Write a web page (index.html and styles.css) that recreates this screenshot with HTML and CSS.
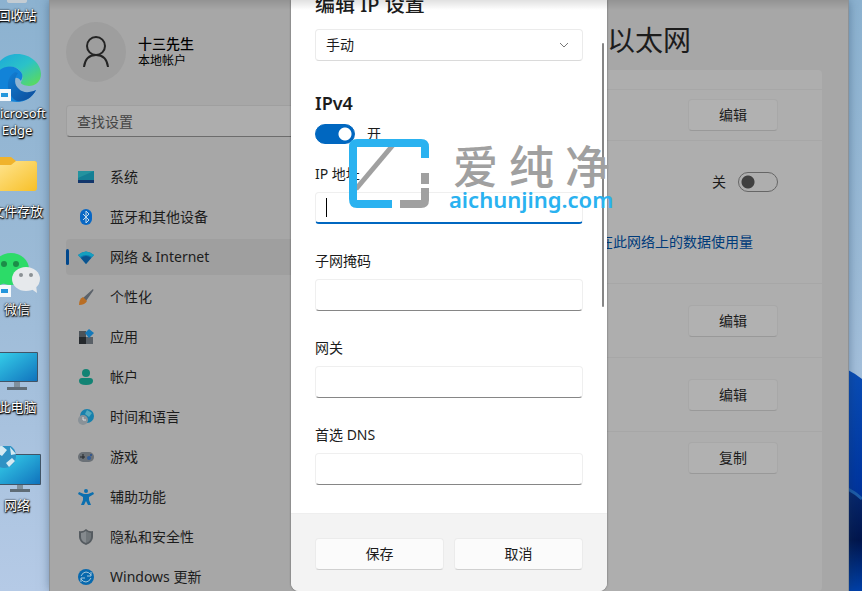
FILE: index.html
```html
<!DOCTYPE html>
<html lang="zh-CN">
<head>
  <meta charset="UTF-8" />
  <meta name="viewport" content="width=device-width, initial-scale=1" />
  <title>编辑 IP 设置</title>
  <link rel="stylesheet" href="styles.css">
</head>
<body>

  <!-- Desktop shortcuts -->
  <ul class="shortcuts">
    <li class="shortcut">
      <svg width="48" height="48" viewBox="0 0 48 48"><path d="M10 4h28l-4 41q0 2-3 2H17q-3 0-3-2z" fill="#c3ccd3"/></svg>
      <span>回收站</span>
    </li>
    <li class="shortcut">
      <svg width="48" height="48" viewBox="0 0 48 48">
        <defs>
          <linearGradient id="edgeTop" x1="0" y1="0" x2="1" y2="1"><stop offset="0" stop-color="#1aa5dc"/><stop offset=".5" stop-color="#2bc2c8"/><stop offset="1" stop-color="#63df4c"/></linearGradient>
          <linearGradient id="edgeLow" x1="0" y1="0" x2="1" y2="1"><stop offset="0" stop-color="#1280d4"/><stop offset="1" stop-color="#0d4a98"/></linearGradient>
        </defs>
        <path d="M0 23C1 9 12 0 24 0c14 0 24 10 24 20 0 8-6 12-12 12-5 0-9-2-8-4 2-3 2-6 0-10C22 9 8 12 0 23z" fill="url(#edgeTop)"/>
        <path d="M0 23c5-9 19-15 27-6 3 3 3 6 1 10-5-8-14 0-10 8 4 8 15 8 25 1-4 8-11 12-19 12C10 48 0 37 0 23z" fill="#1283d8"/>
        <path d="M22 18c-9 5-9 17-3 25 3 4 6 5 9 4 7-1 12-5 15-11-7 3-13 3-17-1-5-4-5-11-1-16z" fill="url(#edgeLow)"/>
        <path d="M5 35h13v12H5z" fill="#f4f8fb"/><path d="M8 39h7v4H8z" fill="#2396dc"/>
      </svg>
      <span>Microsoft</span>
      <span>Edge</span>
    </li>
    <li class="shortcut">
      <svg width="48" height="48" viewBox="0 0 48 48">
        <defs><linearGradient id="folder" x1="0" y1="0" x2="1" y2="1"><stop offset="0" stop-color="#ffe694"/><stop offset="1" stop-color="#f7c028"/></linearGradient></defs>
        <path d="M2 8q0-3 3-3h13l5 4h18q3 0 3 3v5H2z" fill="#f0b32c"/>
        <path d="M2 13h16l5-4h18q3 0 3 3v24q0 3-3 3H5q-3 0-3-3z" fill="url(#folder)"/>
      </svg>
      <span>文件存放</span>
    </li>
    <li class="shortcut">
      <svg width="48" height="48" viewBox="0 0 48 48">
        <ellipse cx="18" cy="19" rx="18" ry="16" fill="#2cdb68"/><path d="M6 28l-1 8 9-4z" fill="#2cdb68"/>
        <circle cx="11" cy="14" r="3" fill="#1c8d48"/><circle cx="23" cy="14" r="3" fill="#1c8d48"/>
        <ellipse cx="33" cy="29" rx="14" ry="12" fill="#e6e9ec"/><path d="M37 38l7 5-1-8z" fill="#e6e9ec"/>
        <circle cx="28" cy="25" r="2" fill="#8b9195"/><circle cx="38" cy="25" r="2" fill="#8b9195"/>
        <path d="M5 35h13v12H5z" fill="#f4f8fb"/><path d="M8 39h7v4H8z" fill="#2396dc"/>
      </svg>
      <span>微信</span>
    </li>
    <li class="shortcut">
      <svg width="48" height="48" viewBox="0 0 48 48">
        <defs><linearGradient id="screen" x1="0" y1="0" x2="1" y2="1"><stop offset="0" stop-color="#36d0ea"/><stop offset="1" stop-color="#1173bd"/></linearGradient></defs>
        <path d="M21 34h6v6h-6z" fill="#80909c"/><path d="M14 39h20v3H14z" fill="#5f6c76"/>
        <rect x="3" y="4" width="42" height="30" rx="1" fill="#425466"/><rect x="4" y="5" width="40" height="28" fill="url(#screen)"/>
      </svg>
      <span>此电脑</span>
    </li>
    <li class="shortcut">
      <svg width="48" height="48" viewBox="0 0 48 48">
        <path d="M24 38h6v6h-6z" fill="#80909c"/><path d="M17 43h20v3H17z" fill="#5f6c76"/>
        <rect x="6" y="8" width="42" height="31" rx="1" fill="#425466"/><rect x="7" y="9" width="40" height="29" fill="url(#screen)"/>
        <circle cx="11" cy="10" r="12" fill="#2e92c4"/><path d="M8-1l6 5-5 6-6-4zM17 1l6 7-5 1zM13 17l6-5 3 3-6 6z" fill="#d4eaf2"/>
      </svg>
      <span>网络</span>
    </li>
  </ul>

  <div class="window">
    <aside class="sidebar">
      <div class="profile">
        <div class="avatar">
          <svg width="28" height="32" viewBox="0 0 28 32" fill="none" stroke="#242424" stroke-width="2"><circle cx="14" cy="10" r="9"/><path d="M2 31c1-8 5-12 12-12s11 4 12 12"/></svg>
        </div>
        <div>
          <div class="profile-name">十三先生</div>
          <div class="profile-type">本地帐户</div>
        </div>
      </div>

      <input class="search" type="text" placeholder="查找设置" aria-label="查找设置">

      <nav class="nav">
        <a href="#"><svg width="16" height="16" viewBox="0 0 16 16"><path d="M0 2h16v12H0z" fill="#147f95"/><path d="M0 11h16v3H0z" fill="#12366b"/><path d="M0 2h16L0 9z" fill="#23939f"/></svg>系统</a>
        <a href="#"><svg width="16" height="16" viewBox="0 0 16 16"><rect x="2" width="12" height="16" rx="6" fill="#0867c4"/><path d="M5 5l6 6-3 3V2l3 3-6 6" fill="none" stroke="#c7dcea"/></svg>蓝牙和其他设备</a>
        <a href="#" class="active"><svg width="16" height="16" viewBox="0 0 16 16"><path d="M0 6q8-7 16 0l-8 9z" fill="#0d76ad"/><path d="M3 9q5-4 10 0l-5 6z" fill="#0b528e"/><path d="M0 6q8-7 16 0l-2 2Q8 4 2 8z" fill="#159fbf"/></svg>网络 &amp; Internet</a>
        <a href="#"><svg width="16" height="16" viewBox="0 0 16 16"><path d="M15 0q1 1 0 2L8 12 5 9z" fill="#5b626a"/><path d="M5 8l4 4q-2 4-8 4 0-6 4-8z" fill="#b96e24"/></svg>个性化</a>
        <a href="#"><svg width="16" height="16" viewBox="0 0 16 16"><path d="M1 2h7v6H1z" fill="#4c5359"/><path d="M1 8h7v7H1z" fill="#25292d"/><path d="M8 8h7v7H8z" fill="#596067"/><path d="M11 0l5 4-5 5-4-5z" fill="#1579b9"/></svg>应用</a>
        <a href="#"><svg width="16" height="16" viewBox="0 0 16 16" fill="#128374"><circle cx="8" cy="4" r="4"/><path d="M1 12q0-3 3-3h8q3 0 3 3 0 4-7 4t-7-4z"/></svg>帐户</a>
        <a href="#"><svg width="16" height="16" viewBox="0 0 16 16"><circle cx="9" cy="7" r="7" fill="#1780ac"/><path d="M9 1l5 3-3 4-4-3z" fill="#53a9bd"/><circle cx="5" cy="11" r="5" fill="#8a9298"/><path d="M5 8v3h3" fill="none" stroke="#dadddf"/></svg>时间和语言</a>
        <a href="#"><svg width="16" height="16" viewBox="0 0 16 16"><rect y="3" width="16" height="10" rx="5" fill="#6b7177"/><path d="M2 8h5M5 5v5" stroke="#22272a"/><circle cx="11" cy="9" r="2" fill="#315e9a"/><circle cx="13" cy="6" r="1" fill="#255190"/></svg>游戏</a>
        <a href="#"><svg width="16" height="16" viewBox="0 0 16 16" fill="#0b6faf"><circle cx="8" cy="2" r="2"/><path d="M1 3l5 2h4l5-2 1 2-5 3v3l2 5h-3l-2-4-2 4H3l2-5V8L0 5z"/></svg>辅助功能</a>
        <a href="#"><svg width="16" height="16" viewBox="0 0 16 16"><path d="M8 0q3 3 7 2v6q0 5-7 8-7-3-7-8V2q4 1 7-2z" fill="#555b60"/><path d="M8 2q3 2 5 2v4q0 4-5 6z" fill="#70767a"/><path d="M8 2Q5 4 3 4v4q0 4 5 6z" fill="#858a8e"/></svg>隐私和安全性</a>
        <a href="#"><svg width="16" height="16" viewBox="0 0 16 16"><circle cx="8" cy="8" r="8" fill="#0869ae"/><path d="M3 7q2-4 5-4 3 0 5 3M13 3v4H9M13 9q-2 4-5 4-3 0-5-3M3 13V9h4" fill="none" stroke="#a4c6d9"/></svg>Windows 更新</a>
      </nav>
    </aside>

    <main class="content">
      <h1>以太网</h1>
      <div class="settings">
        <div class="row row-end"></div>
        <div class="row row-short"><button>编辑</button></div>
        <div class="row row-metered">
          <label class="switch-line">关 <input class="switch" type="checkbox"></label>
          <a class="usage-link" href="#">在此网络上的数据使用量</a>
        </div>
        <div class="row"><button>编辑</button></div>
        <div class="row"><button>编辑</button></div>
        <div class="row row-last"><button>复制</button></div>
      </div>
    </main>

    <!-- Edit IP settings dialog -->
    <form class="dialog" role="dialog" aria-labelledby="dialogTitle">
      <div class="dialog-body">
        <h2 id="dialogTitle">编辑 IP 设置</h2>
        <div class="select-wrap">
          <select aria-label="编辑 IP 设置">
            <option>手动</option>
          </select>
          <svg class="chevron" width="10" height="6" viewBox="0 0 10 6" fill="none" stroke="#777"><path d="M1 1l4 4 4-4"/></svg>
        </div>

        <h3>IPv4</h3>
        <label class="switch-line"><input class="switch" type="checkbox" checked> 开</label>

        <div class="field focused">
          <label for="ip">IP 地址</label>
          <input id="ip" type="text">
          <span class="caret"></span>
        </div>
        <div class="field">
          <label for="mask">子网掩码</label>
          <input id="mask" type="text">
        </div>
        <div class="field">
          <label for="gateway">网关</label>
          <input id="gateway" type="text">
        </div>
        <div class="field">
          <label for="dns">首选 DNS</label>
          <input id="dns" type="text">
        </div>
        <div class="scroll-thumb"></div>
      </div>
      <div class="dialog-footer">
        <button type="button">保存</button>
        <button type="button">取消</button>
      </div>
    </form>

    <!-- Site watermark -->
    <div class="watermark">
      <svg width="80" height="70" viewBox="0 0 80 70" fill="none" stroke-width="8">
        <path d="M7 50L44 6" stroke="#a0a0a0" stroke-width="5"/>
        <path d="M76 19V8q0-4-4-4H8Q4 4 4 8v52q0 5 4 5h35" stroke="#2ab2f0"/>
        <path d="M76 34v11M76 49v12q0 4-4 4H51" stroke="#a0a0a0"/>
      </svg>
      <div>
        <div class="watermark-name"><span>爱</span><span>纯</span><span>净</span></div>
        <div class="watermark-url">aichunjing.com</div>
      </div>
    </div>
  </div>

  <div class="wallpaper">
    <svg width="14" height="221" viewBox="0 0 14 221" preserveAspectRatio="none">
      <defs>
        <linearGradient id="petal" x1="0" y1="0" x2="0" y2="1"><stop offset="0" stop-color="#0a4db5"/><stop offset=".5" stop-color="#0036a0"/><stop offset="1" stop-color="#00206f"/></linearGradient>
        <linearGradient id="fold" x1="0" y1="0" x2="0" y2="1"><stop offset="0" stop-color="#07286f"/><stop offset=".5" stop-color="#02164d"/><stop offset="1" stop-color="#0040a8"/></linearGradient>
      </defs>
      <path d="M0 0q8 4 14 9v212H0z" fill="url(#petal)"/>
      <path d="M0 119q8 4 14 10v92H0z" fill="url(#fold)"/>
      <path d="M0 119q8 4 14 10" fill="none" stroke="#1d5ca8" stroke-width="3"/>
    </svg>
  </div>

</body>
</html>
```
FILE: styles.css
```css
* {
  box-sizing: border-box;
}
body {
  margin: 0;
  height: 100vh;
  display: grid;
  grid-template-columns: 50px 1fr 14px;
  overflow: hidden;
  background: linear-gradient(#8cb2d0, #9bbad6 45%, #b5cae6);
  font-family: "Noto Sans", "Noto Sans CJK SC", sans-serif;
  font-size: 14px;
  line-height: 20px;
  color: #1c1c1c;
}
h1, h2, h3, ul {
  margin: 0;
  padding: 0;
}
svg {
  flex: none;
}
button, input, select {
  font: inherit;
  color: inherit;
}

/* Desktop */
.shortcuts {
  list-style: none;
  width: 34px;
  margin-top: -44px;
}
.shortcut {
  height: 98px;
  display: flex;
  flex-direction: column;
  align-items: center;
  color: #fff;
  font-size: 13px;
  line-height: 17px;
  white-space: nowrap;
  text-shadow: 0 1px 2px #000, 0 0 2px #000, 1px 1px 1px #222;
}
.shortcut svg {
  margin-bottom: 3px;
}
.wallpaper {
  display: flex;
  align-items: flex-end;
}

/* Settings window */
.window {
  position: relative;
  height: 100vh;
  display: flex;
  overflow: hidden;
  background: #a7a7a7;
  box-shadow: 0 0 0 1px #8c9298, 0 0 10px rgba(30, 60, 90, 0.5);
}
.window::after {
  content: "";
  position: absolute;
  inset: 0 0 auto;
  height: 10px;
  background: linear-gradient(rgba(0, 0, 0, 0.12), transparent);
}
.sidebar {
  flex: none;
  width: 280px;
  padding: 22px 0 0 16px;
}
.profile {
  display: flex;
  align-items: center;
  gap: 12px;
  margin-bottom: 23px;
}
.avatar {
  width: 60px;
  height: 60px;
  border-radius: 50%;
  background: #9e9e9e;
  display: flex;
  align-items: center;
  justify-content: center;
}
.profile-name {
  font-weight: 500;
  line-height: 18px;
  color: #000;
}
.profile-type {
  font-size: 12px;
  line-height: 16px;
  color: #000;
}
.search {
  display: block;
  width: 100%;
  height: 32px;
  padding: 0 10px;
  border: 1px solid #9f9f9f;
  border-bottom-color: #6c6c6c;
  border-radius: 4px;
  background: #adadad;
}
.search::placeholder {
  color: #444;
  opacity: 1;
}
.nav {
  display: flex;
  flex-direction: column;
  gap: 4px;
  margin-top: 22px;
}
.nav a {
  display: flex;
  align-items: center;
  gap: 16px;
  height: 36px;
  padding-left: 12px;
  border-radius: 4px;
  color: #1c1c1c;
  text-decoration: none;
}
.nav a.active {
  position: relative;
  background: #9f9f9f;
}
.nav a.active::before {
  content: "";
  position: absolute;
  left: 0;
  width: 3px;
  height: 16px;
  border-radius: 2px;
  background: #00478c;
}
.content {
  flex: 1;
  display: flex;
  flex-direction: column;
  padding: 20px 26px 0 0;
}
.content h1 {
  padding-left: 277px;
  margin-bottom: 10px;
  font-size: 28px;
  font-weight: 400;
  line-height: 40px;
}
.settings {
  flex: 1;
  background: #aeaeae;
  border-radius: 4px;
}
.row {
  display: flex;
  align-items: center;
  justify-content: flex-end;
  height: 74px;
  padding-right: 44px;
  border-bottom: 1px solid #a7a7a7;
}
.row-end {
  height: 20px;
}
.row-short {
  height: 51px;
}
.row-metered {
  height: 143px;
  flex-direction: column;
  align-items: flex-end;
  justify-content: center;
  gap: 40px;
}
.row-last {
  height: auto;
  padding-top: 10px;
  border: 0;
}
.row button {
  width: 90px;
  height: 32px;
  border: 1px solid #a8a8a8;
  border-bottom-color: #999;
  border-radius: 4px;
  background: #b1b1b1;
}
.usage-link {
  margin-right: 25px;
  color: #003b7a;
  text-decoration: none;
}
.switch-line {
  display: flex;
  align-items: center;
  gap: 12px;
}
.switch {
  appearance: none;
  width: 40px;
  height: 20px;
  margin: 0;
  border: 1px solid #666;
  border-radius: 10px;
  background: radial-gradient(circle at 9px 9px, #404040 6px, transparent 7px);
}
.switch:checked {
  border-color: #0067c0;
  background: radial-gradient(circle at 29px 9px, #fff 6px, #0067c0 7px);
}

/* Dialog */
.dialog {
  position: absolute;
  inset: 0;
  margin: 0 auto;
  width: 316px;
  display: flex;
  flex-direction: column;
  overflow: hidden;
  background: #fff;
  border-radius: 0 0 8px 8px;
  box-shadow: 0 0 2px rgba(0, 0, 0, 0.5);
}
.dialog-body {
  position: relative;
  flex: 1;
  padding: 0 24px;
}
.dialog h2 {
  margin: -9px 0 10px;
  font-size: 20px;
  font-weight: 500;
  line-height: 28px;
}
.select-wrap {
  position: relative;
}
.select-wrap select {
  appearance: none;
  display: block;
  width: 100%;
  height: 32px;
  padding: 0 10px;
  border: 1px solid #ebebeb;
  border-bottom-color: #dadada;
  border-radius: 4px;
  background: #fff;
}
.chevron {
  position: absolute;
  right: 14px;
  top: 13px;
}
.dialog h3 {
  margin: 29px 0 8px;
  font-size: 18px;
  font-weight: 600;
  line-height: 26px;
}
.field {
  position: relative;
  margin-bottom: 27px;
}
.switch-line + .field {
  margin-top: 20px;
}
.field label {
  display: block;
  margin-bottom: 8px;
}
.field input {
  display: block;
  width: 100%;
  height: 32px;
  padding: 0 10px;
  border: 1px solid #efefef;
  border-bottom-color: #868686;
  border-radius: 4px;
  background: #fff;
}
.field.focused input {
  border-bottom: 2px solid #0067c0;
}
.caret {
  position: absolute;
  left: 11px;
  bottom: 7px;
  width: 1px;
  height: 19px;
  background: #000;
}
.scroll-thumb {
  position: absolute;
  right: 3px;
  top: 43px;
  width: 2px;
  height: 264px;
  border-radius: 1px;
  background: #868686;
}
.dialog-footer {
  display: flex;
  gap: 10px;
  padding: 24px 24px 21px;
  background: #f3f3f3;
  border-top: 1px solid #eee;
}
.dialog-footer button {
  flex: 1;
  height: 32px;
  border: 1px solid #ebebeb;
  border-bottom-color: #d0d0d0;
  border-radius: 4px;
  background: #fbfbfb;
}

/* Watermark lies over the dialog */
.watermark {
  position: absolute;
  top: 139px;
  left: calc(50% - 100px);
  display: flex;
  gap: 20px;
  pointer-events: none;
}
.watermark-name {
  display: flex;
  gap: 11px;
  padding: 4px 0 0 4px;
  font-family: "Noto Sans CJK SC", sans-serif;
  font-size: 45px;
  font-weight: 500;
  line-height: 44px;
  color: #a0a0a0;
}
.watermark-url {
  font-size: 22px;
  font-weight: 600;
  line-height: 24px;
  color: #2ab2f0;
}
```
